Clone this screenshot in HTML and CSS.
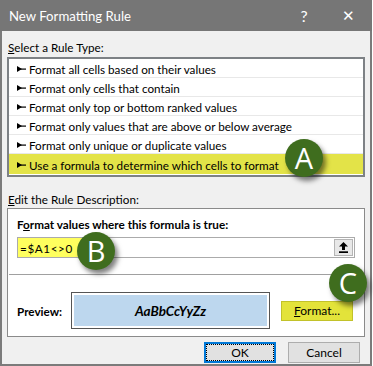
FILE: index.html
```html
<!DOCTYPE html>
<html lang="en">
<head>
    <meta charset="UTF-8">
    <meta name="viewport" content="width=device-width, initial-scale=1.0">
    <title>New Formatting Rule</title>
    <link rel="stylesheet" href="styles.css">
</head>
<body>

    <div class="dialog">
        <div class="titlebar">
            <span class="title">New Formatting Rule</span>
            <span class="help">?</span>
            <span class="close">&#x2715;</span>
        </div>

        <div class="content">
            <div class="label"><u>S</u>elect a Rule Type:</div>

            <ul class="rule-list">
                <li><svg class="bullet" width="9" height="6" viewBox="0 0 9 6"><polygon points="0,0 0,6 5,3"/><rect x="3" y="2.5" width="6" height="1.2"/></svg>Format all cells based on their values</li>
                <li><svg class="bullet" width="9" height="6" viewBox="0 0 9 6"><polygon points="0,0 0,6 5,3"/><rect x="3" y="2.5" width="6" height="1.2"/></svg>Format only cells that contain</li>
                <li><svg class="bullet" width="9" height="6" viewBox="0 0 9 6"><polygon points="0,0 0,6 5,3"/><rect x="3" y="2.5" width="6" height="1.2"/></svg>Format only top or bottom ranked values</li>
                <li><svg class="bullet" width="9" height="6" viewBox="0 0 9 6"><polygon points="0,0 0,6 5,3"/><rect x="3" y="2.5" width="6" height="1.2"/></svg>Format only values that are above or below average</li>
                <li><svg class="bullet" width="9" height="6" viewBox="0 0 9 6"><polygon points="0,0 0,6 5,3"/><rect x="3" y="2.5" width="6" height="1.2"/></svg>Format only unique or duplicate values</li>
                <li class="selected"><svg class="bullet" width="9" height="6" viewBox="0 0 9 6"><polygon points="0,0 0,6 5,3"/><rect x="3" y="2.5" width="6" height="1.2"/></svg>Use a formula to determine which cells to format</li>
            </ul>

            <div class="label label-edit"><u>E</u>dit the Rule Description:</div>

            <div class="desc-box">
                <div class="desc-title">F<u>o</u>rmat values where this formula is true:</div>
                <div class="formula">
                    <span class="formula-text">=$A1&lt;&gt;0</span>
                    <span class="pick-btn">
                        <svg width="9" height="11" viewBox="0 0 9 11"><polygon points="4.5,0 9,4.5 6,4.5 6,8 3,8 3,4.5 0,4.5"/><rect x="0" y="9.3" width="9" height="1.7"/></svg>
                    </span>
                </div>
                <div class="divider"></div>
                <div class="preview-row">
                    <span class="preview-label">Preview:</span>
                    <div class="preview-box"><span>AaBbCcYyZz</span></div>
                    <button class="btn btn-format"><u>F</u>ormat...</button>
                </div>
            </div>

            <div class="buttons">
                <button class="btn btn-ok"><span>OK</span></button>
                <button class="btn">Cancel</button>
            </div>
        </div>

        <span class="badge badge-a">A</span>
        <span class="badge badge-b">B</span>
        <span class="badge badge-c">C</span>
    </div>

</body>
</html>
```

FILE: styles.css
```css
body {
    margin: 0;
    background: #ffffff;
    font-family: Lato, "Noto Sans", sans-serif;
    font-size: 11.7px;
    color: #000;
}
.dialog {
    position: relative;
    width: 372px;
    height: 366px;
    box-sizing: border-box;
    background: #f0f0f0;
    border: 2px solid #7b7b7b;
    border-top: none;
}
.titlebar {
    display: flex;
    align-items: center;
    height: 31px;
    margin: 0 -2px;
    background: #767676;
    color: #fff;
    font-size: 13.2px;
}
.title {
    flex: 1;
    padding-left: 9px;
}
.help {
    width: 20px;
    text-align: center;
    font-size: 16px;
    margin-right: 24px;
}
.close {
    width: 20px;
    text-align: center;
    font-size: 15px;
    margin-right: 14px;
}
.content {
    padding: 0 5px;
}
.label {
    height: 16px;
    line-height: 16px;
    margin-top: 8px;
    margin-bottom: 2px;
    padding-left: 1px;
}
.label-edit {
    margin-top: 14px;
    margin-bottom: 1px;
}
.rule-list {
    list-style: none;
    margin: 0;
    padding: 0 0 1px 0;
    background: #fff;
    border: 2px solid #7d8185;
}
.rule-list li {
    display: flex;
    align-items: center;
    height: 17px;
    border-bottom: 1px solid #e8e8e8;
    padding-left: 8px;
    padding-top: 1px;
}
.rule-list li.selected {
    height: 19px;
    border-bottom: none;
    background: #e3e348;
}
.bullet {
    margin-right: 3px;
    fill: #000;
}
.desc-box {
    background: #fff;
    border: 1px solid #8a8a8a;
    padding: 7px 9px 7px 9px;
}
.desc-title {
    font-weight: bold;
    height: 16px;
    line-height: 16px;
}
.formula {
    display: flex;
    align-items: center;
    height: 19px;
    margin-top: 5px;
    border: 1px solid #ababab;
}
.formula-text {
    align-self: stretch;
    display: flex;
    align-items: center;
    width: 64px;
    padding-left: 2px;
    background: #ffff5e;
    letter-spacing: 0.6px;
}
.pick-btn {
    margin-left: auto;
    display: flex;
    align-items: center;
    justify-content: center;
    width: 19px;
    height: 17px;
    margin-right: 1px;
    background: #e8e8e8;
    border: 1px solid #b5b5b5;
    box-sizing: border-box;
}
.divider {
    height: 1px;
    background: #a0a0a0;
    margin: 16px -8px 0 -8px;
}
.preview-row {
    display: flex;
    align-items: center;
    margin-top: 17px;
}
.preview-label {
    font-weight: bold;
    width: 54px;
}
.preview-box {
    width: 199px;
    height: 37px;
    box-sizing: border-box;
    border: 1px solid #555;
    padding: 2px;
    background: #fff;
}
.preview-box span {
    display: flex;
    align-items: center;
    justify-content: center;
    height: 100%;
    background: #bdd7ee;
    font-weight: bold;
    font-style: italic;
    font-size: 13.5px;
}
.btn {
    width: 72px;
    height: 21px;
    box-sizing: border-box;
    background: #e1e1e1;
    border: 1px solid #adadad;
    font-family: inherit;
    font-size: 12px;
    padding: 0;
    color: #000;
}
.btn-format {
    margin-left: 11px;
    height: 20px;
    background: #e3e33a;
    border-color: #c2c22a;
}
.buttons {
    display: flex;
    justify-content: flex-end;
    gap: 12px;
    margin-top: 5px;
    padding-right: 5px;
}
.btn-ok {
    border: 2px solid #0078d7;
    padding: 1px;
}
.btn-ok span {
    display: flex;
    align-items: center;
    justify-content: center;
    height: 100%;
    outline: 1px dotted #000;
}
.badge {
    position: absolute;
    width: 38px;
    height: 38px;
    border-radius: 50%;
    background: #3f6d1e;
    color: #fff;
    font-family: "Open Sans", "Noto Sans", sans-serif;
    font-size: 29px;
    line-height: 38px;
    text-align: center;
    box-shadow: 3px 4px 5px rgba(0, 0, 0, 0.5);
}
.badge-a { left: 283px; top: 139px; }
.badge-b { left: 75px; top: 232px; }
.badge-c { left: 327px; top: 264px; }
```
